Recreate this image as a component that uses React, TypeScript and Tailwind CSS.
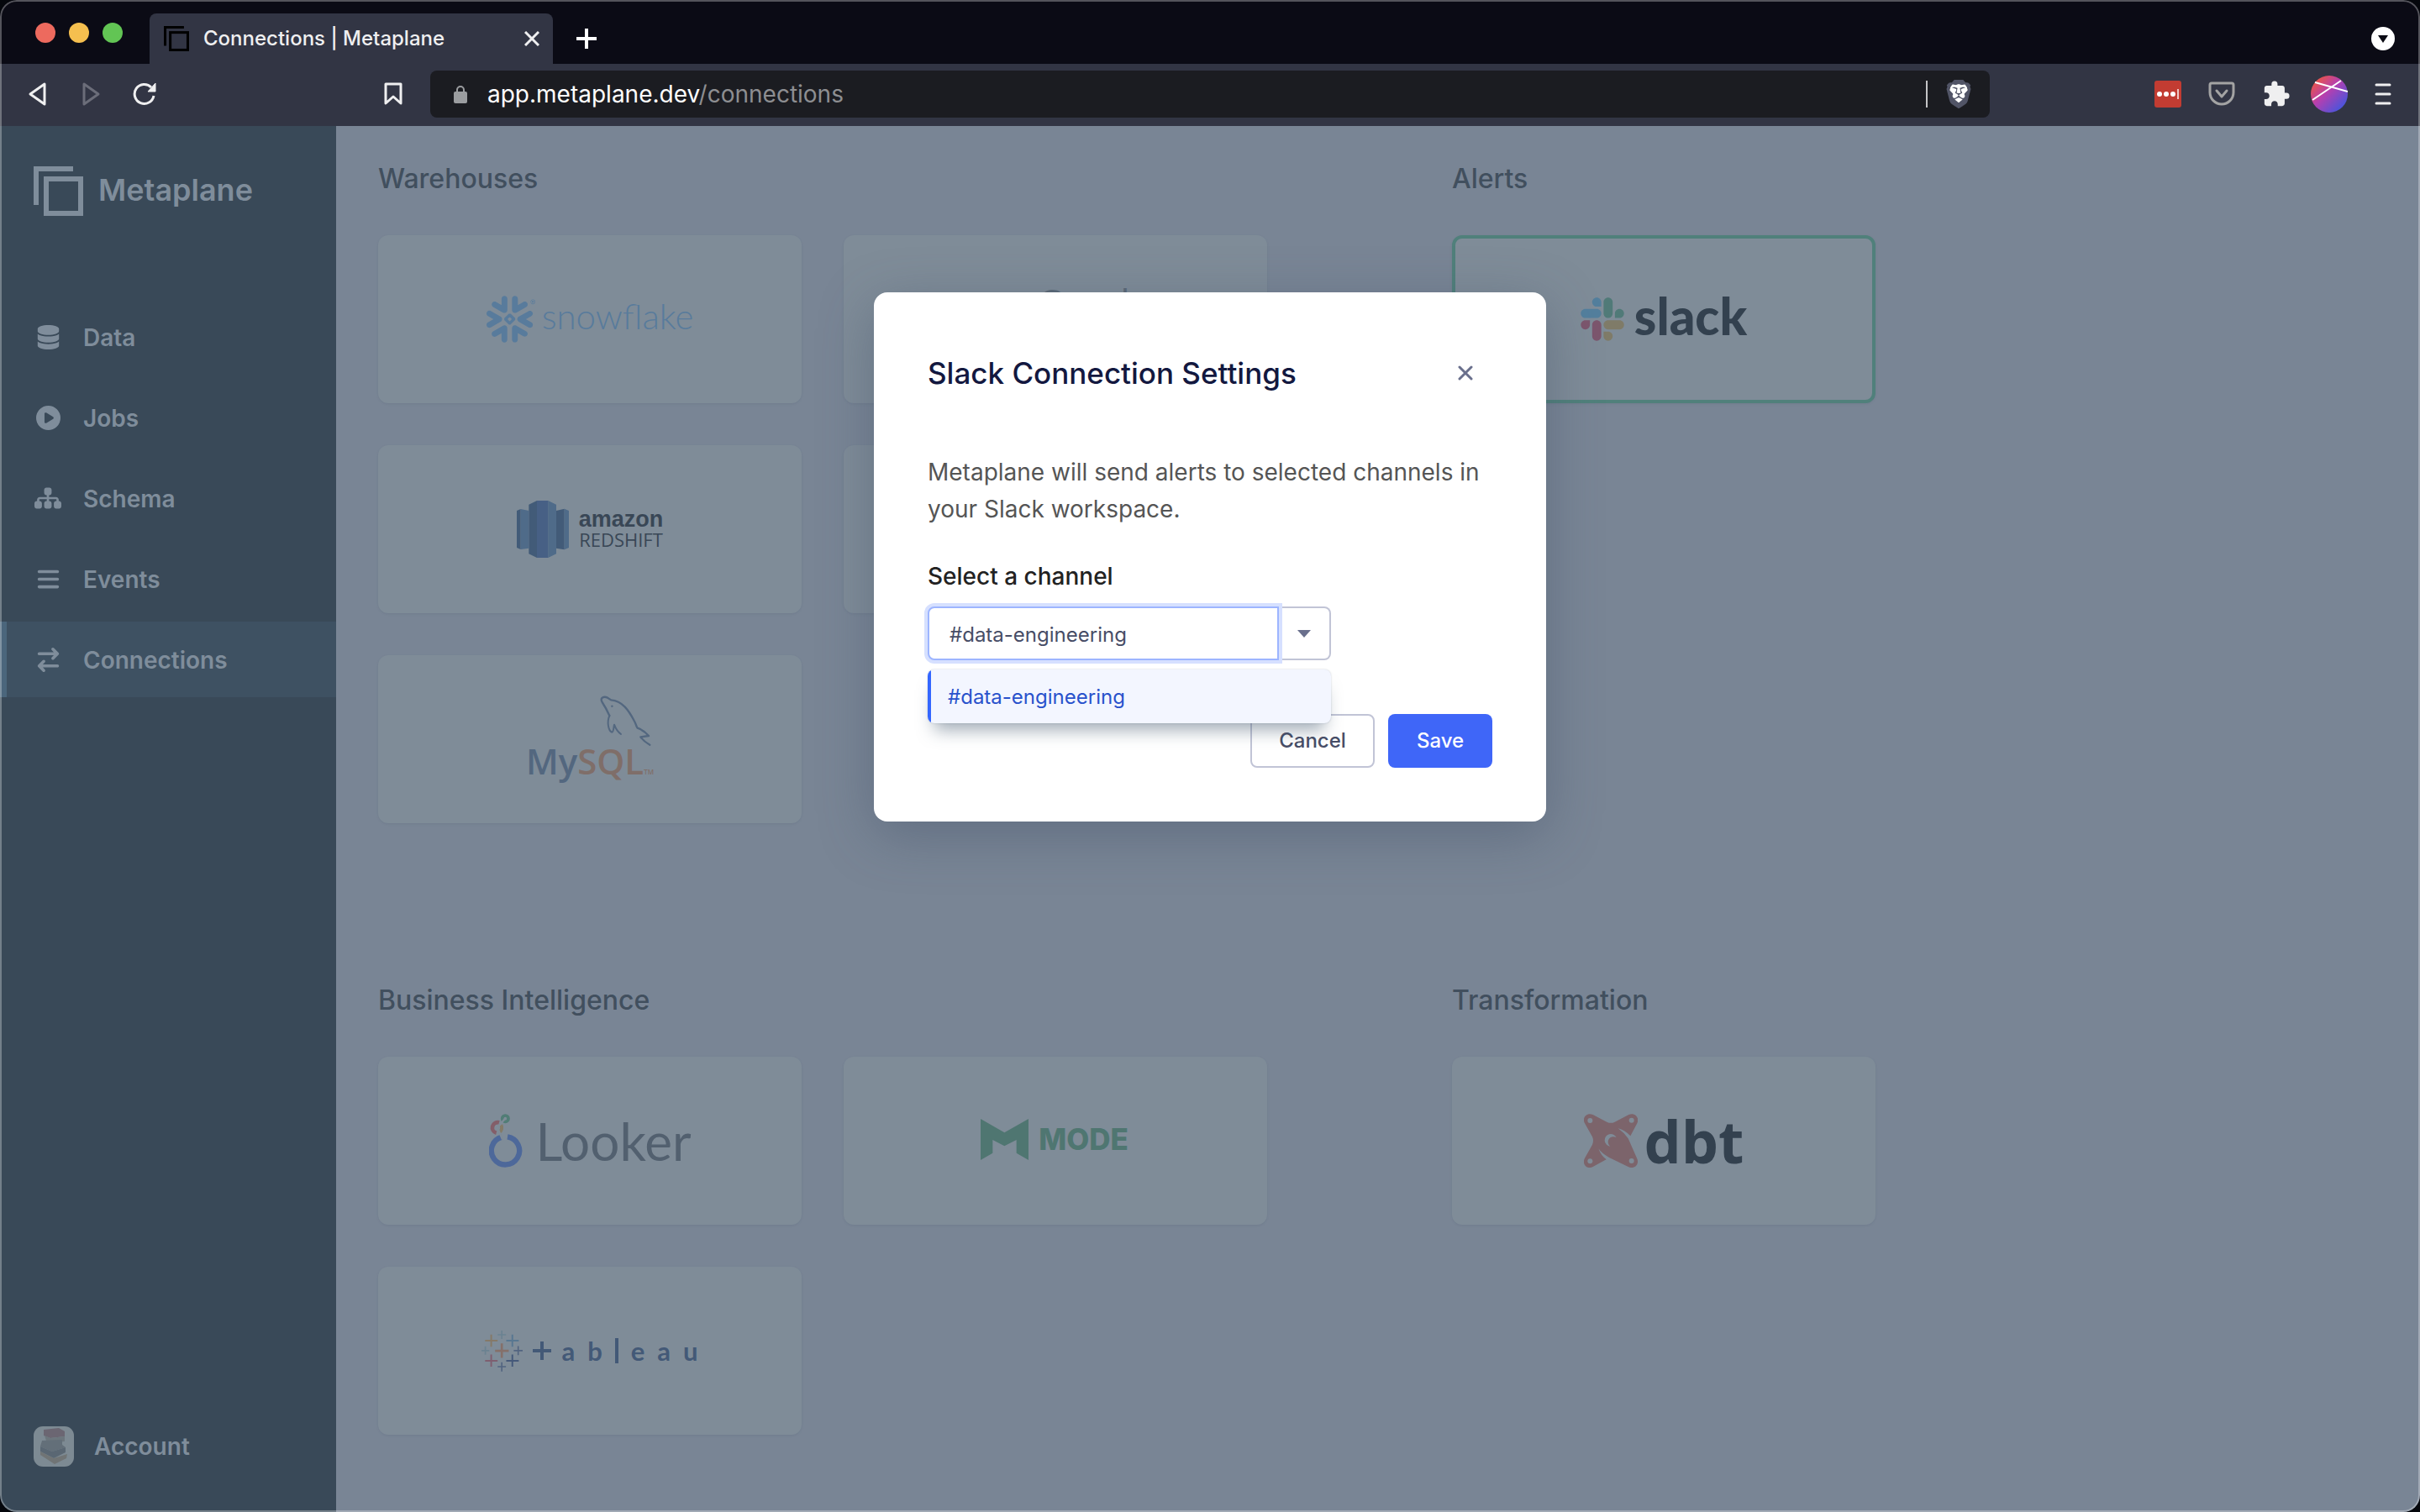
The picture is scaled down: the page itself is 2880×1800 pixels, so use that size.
import type { ReactNode } from 'react'
import { FaArrowRightArrowLeft, FaBars, FaCirclePlay, FaDatabase, FaSitemap } from 'react-icons/fa6'
import { MdExtension } from 'react-icons/md'
import { SiBrave, SiSnowflake } from 'react-icons/si'

const navItems = [
  { label: 'Data', icon: FaDatabase, iconClass: 'text-[29px]' },
  { label: 'Jobs', icon: FaCirclePlay, iconClass: 'text-[29px]' },
  { label: 'Schema', icon: FaSitemap, iconClass: 'text-[32px]' },
  { label: 'Events', icon: FaBars, iconClass: 'text-[29px]' },
  { label: 'Connections', icon: FaArrowRightArrowLeft, iconClass: 'text-[29px]', active: true },
]

function MetaplaneMark({ className }: { className?: string }) {
  return (
    <svg viewBox="0 0 59 59" fill="none" stroke="currentColor" strokeWidth="6" className={className}>
      <path d="M3 46V3H47" />
      <rect x="15" y="15" width="41" height="41" />
    </svg>
  )
}

function SnowflakeLogo() {
  return (
    <div className="flex items-center gap-2 text-[#587b9c]">
      <SiSnowflake className="size-[58px]" />
      <span className="pb-2 font-[Lato] text-[42px] leading-[50px] font-light">snowflake</span>
    </div>
  )
}

function BigQueryLogo() {
  return (
    <div className="flex items-center gap-5 pl-7 text-[#5b6977]">
      <svg viewBox="0 0 80 60" className="h-[60px] w-20">
        <path fill="#4f6b99" d="M24 2H56L74 30 56 58H24L6 30Z" />
        <circle cx="40" cy="29" r="12" fill="none" stroke="#7f8c98" strokeWidth="4" />
      </svg>
      <div className="flex flex-col items-start font-['Liberation_Sans'] text-[40px] leading-[42px]">
        <span>Google</span>
        <span>BigQuery</span>
      </div>
    </div>
  )
}

function RedshiftLogo() {
  return (
    <div className="flex items-center gap-3">
      <svg viewBox="0 0 186 204" className="h-[68px] w-[62px]">
        <path fill="#425b78" d="M0 36 14 30V174L0 168ZM43 14 72 0V204L43 190ZM141 36 170 29V175L141 170Z" />
        <path fill="#4f6b89" d="M14 30 43 36V170L14 174ZM112 0 141 14V190L112 204ZM170 29 186 36V168L170 175Z" />
        <path fill="#476085" d="M72 0H112V204H72Z" />
      </svg>
      <div className="flex flex-col text-[#394756]">
        <span className="font-['Liberation_Sans'] text-[27px] leading-6 font-bold">amazon</span>
        <span className="font-['Open_Sans'] text-[22px] leading-6">REDSHIFT</span>
      </div>
    </div>
  )
}

function MysqlLogo() {
  return (
    <div className="flex flex-col pt-1">
      <svg viewBox="0 0 186 180" fill="none" stroke="#53677f" strokeLinecap="round" strokeLinejoin="round" className="ml-[88px] h-[60px] w-[62px]">
        <path strokeWidth="7" d="M34 72C24 50 16 36 8 24C0 10 10 3 22 6C30 8 34 14 40 16C80 18 104 56 122 90C130 104 130 112 134 116C150 122 164 132 174 144L145 148C152 158 160 166 178 176" />
        <path strokeWidth="6" d="M34 72C24 94 30 126 42 131C50 130 48 114 51 104C56 118 64 130 75 138" />
        <circle cx="43" cy="38" r="3" fill="#53677f" />
      </svg>
      <div className="flex items-baseline font-['Open_Sans'] text-[42px] leading-9 font-semibold">
        <span className="text-[#53677f]">My</span>
        <span className="text-[#7f6e69]">SQL</span>
        <span className="text-[8px] text-[#7f6e69]">TM</span>
      </div>
    </div>
  )
}

function SlackLogo() {
  return (
    <div className="flex items-center gap-3">
      <svg viewBox="0 0 127 127" className="size-[52px]">
        <path fill="#7c566d" d="M27.2 80c0 7.3-5.9 13.2-13.2 13.2C6.7 93.2.8 87.3.8 80c0-7.3 5.9-13.2 13.2-13.2h13.2V80zm6.6 0c0-7.3 5.9-13.2 13.2-13.2 7.3 0 13.2 5.9 13.2 13.2v33c0 7.3-5.9 13.2-13.2 13.2-7.3 0-13.2-5.9-13.2-13.2V80z" />
        <path fill="#537f9d" d="M47 27c-7.3 0-13.2-5.9-13.2-13.2C33.8 6.5 39.7.6 47 .6c7.3 0 13.2 5.9 13.2 13.2V27H47zm0 6.7c7.3 0 13.2 5.9 13.2 13.2 0 7.3-5.9 13.2-13.2 13.2H13.9C6.6 60.1.7 54.2.7 46.9c0-7.3 5.9-13.2 13.2-13.2H47z" />
        <path fill="#507a78" d="M99.9 46.9c0-7.3 5.9-13.2 13.2-13.2 7.3 0 13.2 5.9 13.2 13.2 0 7.3-5.9 13.2-13.2 13.2H99.9V46.9zm-6.6 0c0 7.3-5.9 13.2-13.2 13.2-7.3 0-13.2-5.9-13.2-13.2V13.8C66.9 6.5 72.8.6 80.1.6c7.3 0 13.2 5.9 13.2 13.2v33.1z" />
        <path fill="#7f7b68" d="M80.1 99.8c7.3 0 13.2 5.9 13.2 13.2 0 7.3-5.9 13.2-13.2 13.2-7.3 0-13.2-5.9-13.2-13.2V99.8h13.2zm0-6.6c-7.3 0-13.2-5.9-13.2-13.2 0-7.3 5.9-13.2 13.2-13.2h33.1c7.3 0 13.2 5.9 13.2 13.2 0 7.3-5.9 13.2-13.2 13.2H80.1z" />
      </svg>
      <span className="pb-2 font-[Lato] text-[60px] leading-[44px] font-black text-[#33414f]">slack</span>
    </div>
  )
}

function LookerLogo() {
  return (
    <div className="flex items-center gap-4">
      <svg viewBox="0 0 120 192" fill="none" className="h-16 w-10">
        <path stroke="#4d689a" strokeWidth="19" d="M46 83A50 50 0 1 0 66 82" />
        <path stroke="#835e69" strokeWidth="14" d="M26 68A19 19 0 1 1 36 31" />
        <path stroke="#847b67" strokeWidth="12" d="M43 40A19 19 0 0 1 36 66" />
        <circle stroke="#517d76" strokeWidth="11" cx="58" cy="17" r="11" />
        <path stroke="#7f8c98" strokeWidth="7" d="M57 17 30 49 48 92" />
      </svg>
      <span className="font-[Lato] text-[62px] leading-16 text-[#52606f]">Looker</span>
    </div>
  )
}

function ModeLogo() {
  return (
    <div className="flex items-center gap-3 pr-[2px] pb-1 text-[#4f7671]">
      <svg viewBox="0 0 171 147" fill="currentColor" className="h-[49px] w-[57px]">
        <path d="M0 0 85 49 171 0V147L128 122V75L85 97L43 75V122L0 147Z" />
      </svg>
      <span className="font-[Inter] text-[35px] leading-[49px] font-extrabold">MODE</span>
    </div>
  )
}

function DbtLogo() {
  return (
    <div className="flex items-center gap-2">
      <svg viewBox="0 0 192 192" className="size-16">
        <path
          fill="#7c646b"
          d="M32 3 82 29Q96 36 110 29L160 3C182-6 200 14 190 34L166 79Q146 58 122 52Q142 66 158 88L189 158C200 180 180 200 158 189L90 156Q62 140 52 124Q60 148 80 163L32 189C10 200-8 180 3 158L30 110Q36 96 30 82L3 34C-8 14 10-6 32 3Z"
        />
        <g fill="#7f8c98">
          <circle cx="22" cy="24" r="9" />
          <circle cx="170" cy="23" r="9" />
          <circle cx="22" cy="169" r="9" />
          <circle cx="170" cy="168" r="9" />
          <path d="M116 85A22 22 0 1 0 94 116A15 15 0 0 1 116 85Z" />
        </g>
      </svg>
      <span className="font-['Open_Sans'] text-[70px] leading-16 font-bold text-[#33414f]">dbt</span>
    </div>
  )
}

function TableauLogo() {
  return (
    <div className="flex items-center gap-3 text-[#435977]">
      <svg viewBox="0 0 148 148" fill="none" strokeWidth="6" className="size-[49px]">
        <path stroke="#857968" d="M35 14V58M13 36H58" />
        <path stroke="#587791" d="M111 14V58M89 36H134" />
        <path stroke="#7e5f70" d="M35 86V130M13 109H58" />
        <path stroke="#45597a" d="M111 86V130M89 109H134" />
        <path stroke="#85706a" strokeWidth="8" d="M73 46V98M49 73H98" />
        <path stroke="#6b8291" strokeWidth="5" d="M73 0V30M58 15H88M14 57V87M0 72H28" />
        <path stroke="#526480" strokeWidth="5" d="M73 114V147M58 130H88M132 56V88M116 72H148" />
      </svg>
      <svg viewBox="0 0 22 22" stroke="currentColor" strokeWidth="4" className="size-[22px]">
        <path d="M11 0V22M0 11H22" />
      </svg>
      <div className="flex items-center gap-[15px] font-[Lato] text-[31px] leading-[49px] font-bold">
        <span>a</span>
        <span>b</span>
        <span className="h-[30px] w-1 bg-[#435977]" />
        <span>e</span>
        <span>a</span>
        <span>u</span>
      </div>
    </div>
  )
}

function Card({ name, connected, children }: { name: string; connected?: boolean; children?: ReactNode }) {
  return (
    <button
      type="button"
      aria-label={name}
      className={
        connected
          ? 'flex h-[200px] w-[504px] items-center justify-center rounded-xl border-4 border-[#50807b] bg-[#7f8c98] shadow-sm shadow-slate-600/10'
          : 'flex h-[200px] w-[504px] items-center justify-center rounded-xl bg-[#7f8c98] shadow-sm shadow-slate-600/10'
      }
    >
      {children}
    </button>
  )
}

function Section({ title, wide, children }: { title: string; wide?: boolean; children: ReactNode }) {
  return (
    <section>
      <h2 className="mb-[43px] text-[32px] leading-[48px] font-medium text-[#414f5e]">{title}</h2>
      <div className={wide ? 'grid grid-cols-2 gap-[50px]' : 'grid gap-[50px]'}>{children}</div>
    </section>
  )
}

function BrowserChrome() {
  return (
    <header className="text-[#efeff0]">
      <div className="flex h-[76px] items-end bg-[#0b0b15] pl-[42px]">
        <div className="flex h-[76px] items-center gap-4 pt-[2px]">
          <span className="size-6 rounded-full bg-[#ed6a5e]" />
          <span className="size-6 rounded-full bg-[#f5bf4f]" />
          <span className="size-6 rounded-full bg-[#62c554]" />
        </div>
        <div className="ml-8 flex h-[60px] w-[480px] items-center rounded-t-lg bg-[#323544] pr-4 pl-[17px]">
          <MetaplaneMark className="size-[30px] text-black" />
          <span className="ml-[17px] text-[24px] font-medium">Connections | Metaplane</span>
          <button type="button" aria-label="Close tab" className="ml-auto">
            <svg viewBox="0 0 18 18" stroke="currentColor" strokeWidth="3" className="size-[18px]">
              <path d="M1 1 17 17M17 1 1 17" />
            </svg>
          </button>
        </div>
        <button type="button" aria-label="New tab" className="mb-[18px] ml-7">
          <svg viewBox="0 0 24 24" stroke="#fff" strokeWidth="4" className="size-6">
            <path d="M12 0V24M0 12H24" />
          </svg>
        </button>
        <button type="button" aria-label="Search tabs" className="mr-[30px] mb-4 ml-auto">
          <svg viewBox="0 0 28 28" className="size-7">
            <circle cx="14" cy="14" r="14" fill="#fff" />
            <path d="M8 10H20L14 19Z" fill="#0b0b15" />
          </svg>
        </button>
      </div>

      <div className="flex h-[74px] items-center bg-[#323544] px-[34px] pb-[2px]">
        <button type="button" aria-label="Back">
          <svg viewBox="0 0 22 28" fill="none" stroke="currentColor" strokeWidth="3" strokeLinejoin="round" className="h-7 w-[22px]">
            <path d="M19 2V26L2 14Z" />
          </svg>
        </button>
        <button type="button" aria-label="Forward" className="ml-[42px] text-[#6b6d79]">
          <svg viewBox="0 0 22 28" fill="none" stroke="currentColor" strokeWidth="3" strokeLinejoin="round" className="h-7 w-[22px]">
            <path d="M2 2V26L19 14Z" />
          </svg>
        </button>
        <button type="button" aria-label="Reload" className="ml-[38px]">
          <svg viewBox="0 0 28 28" fill="none" stroke="currentColor" strokeWidth="3" className="size-7">
            <path d="M25 16A11.500 11.500 0 1 1 22 6" />
            <path d="M27 1V11H18Z" fill="currentColor" strokeWidth="1" />
          </svg>
        </button>
        <button type="button" aria-label="Bookmark" className="ml-[271px]">
          <svg viewBox="0 0 22 28" fill="none" stroke="currentColor" strokeWidth="3" strokeLinejoin="round" className="h-7 w-[22px]">
            <path d="M2 2H20V25L11 17L2 25Z" />
          </svg>
        </button>
        <div className="ml-[33px] flex h-14 flex-1 items-center rounded-lg bg-[#1b1c21] pr-5 pl-7">
          <svg viewBox="0 0 16 22" className="h-[22px] w-4">
            <path d="M4 10V6a4 4 0 0 1 8 0V10" fill="none" stroke="#9b9da0" strokeWidth="2" />
            <rect y="8" width="16" height="14" rx="2" fill="#9b9da0" />
          </svg>
          <span className="ml-6 text-[28px] text-white">
            app.metaplane.dev<span className="text-[#8d8e91]">/connections</span>
          </span>
          <span className="ml-auto h-8 w-[2px] bg-[#c4c4c6]" />
          <span className="relative ml-5 flex h-10 w-[34px] items-center justify-center">
            <svg viewBox="0 0 34 40" className="absolute inset-0 h-10 w-[34px]">
              <path d="M8 8H26L28 16L24 28L17 34L10 28L6 16Z" fill="#fff" />
            </svg>
            <SiBrave className="relative size-9 text-[#515466]" />
          </span>
        </div>
        <div className="ml-[196px] flex items-center">
          <svg viewBox="0 0 32 32" className="size-8">
            <rect width="32" height="32" rx="3" fill="#c23c32" />
            <g fill="#fff">
              <circle cx="6" cy="16" r="3" />
              <circle cx="14" cy="16" r="3" />
              <circle cx="22" cy="16" r="3" />
              <rect x="27" y="10" width="2" height="12" opacity="0.7" />
            </g>
          </svg>
          <svg viewBox="0 0 32 30" fill="none" stroke="#a3a3a3" strokeWidth="3" strokeLinecap="round" strokeLinejoin="round" className="ml-8 h-[30px] w-8">
            <path d="M4 2H28Q30 2 30 4V13A14 14 0 0 1 2 13V4Q2 2 4 2Z" />
            <path d="M10 11 16 18 22 11" />
          </svg>
          <MdExtension className="ml-8 size-[34px]" />
          <svg viewBox="0 0 44 44" className="ml-6 size-11">
            <defs>
              <linearGradient id="avatar" x1="0" y1="0" x2="1" y2="1">
                <stop offset="0.1" stopColor="#f0563f" />
                <stop offset="0.45" stopColor="#b53fb0" />
                <stop offset="0.9" stopColor="#3f57e0" />
              </linearGradient>
            </defs>
            <circle cx="22" cy="22" r="22" fill="url(#avatar)" />
            <path d="M2 29 36 6M5 8 44 19" stroke="#fff" strokeWidth="2" />
          </svg>
          <button type="button" aria-label="Menu" className="ml-8">
            <svg viewBox="0 0 20 26" stroke="currentColor" strokeWidth="3" strokeLinecap="round" className="h-[26px] w-5">
              <path d="M2 2H18M2 13H18M2 24H18" />
            </svg>
          </button>
        </div>
      </div>
    </header>
  )
}

function Sidebar() {
  return (
    <aside className="flex w-[400px] shrink-0 flex-col bg-[#394958] pb-[54px] text-[#7f8d9b]">
      <div className="flex items-center gap-[18px] pt-12 pl-10">
        <MetaplaneMark className="size-[59px]" />
        <span className="pb-1 text-[36px] leading-[54px] font-semibold">Metaplane</span>
      </div>
      <nav className="mt-[99px] flex flex-col gap-[6px]">
        {navItems.map(item => (
          <a
            key={item.label}
            href="#"
            className={
              item.active
                ? 'flex h-[90px] items-center border-l-8 border-[#4b667c] bg-[#3e5162] pl-[31px]'
                : 'flex h-[90px] items-center border-l-8 border-transparent pl-[31px]'
            }
          >
            <span className="flex w-9 justify-center">
              <item.icon className={item.iconClass} />
            </span>
            <span className="ml-6 pt-[2px] text-[28px] font-semibold">{item.label}</span>
          </a>
        ))}
      </nav>
      <a href="#" className="mt-auto flex items-center gap-6 pl-10">
        <svg viewBox="0 0 48 48" className="size-12">
          <rect width="48" height="48" rx="11" fill="#7d8a93" />
          <path d="M12 4 30 2 37 6V12L20 14 12 11Z" fill="#6b6672" />
          <path d="M13 11 20 14 37 12V18L16 20Z" fill="#6c767d" />
          <path d="M10 17 34 16V22L38 25 22 30 8 24Z" fill="#636f79" />
          <path d="M8 24 22 30 38 25V31L24 38 8 30Z" fill="#5a6773" />
          <path d="M8 30 24 38 40 33 39 38 25 45 8 34Z" fill="#707475" />
        </svg>
        <span className="text-[28px] font-semibold">Account</span>
      </a>
    </aside>
  )
}

function SlackDialog() {
  return (
    <div
      role="dialog"
      aria-labelledby="dialog-title"
      className="w-[800px] rounded-2xl bg-white p-16 shadow-[0_16px_64px_rgba(60,75,100,0.4)]"
    >
      <div className="flex h-16 items-center justify-between">
        <h1 id="dialog-title" className="text-[35px] font-medium text-[#13183f]">
          Slack Connection Settings
        </h1>
        <button type="button" aria-label="Close" className="flex size-16 items-center justify-center text-[#696f8c]">
          <svg viewBox="0 0 18 18" stroke="currentColor" strokeWidth="3" strokeLinecap="round" className="size-[18px]">
            <path d="M2 2 16 16M16 2 2 16" />
          </svg>
        </button>
      </div>

      <p className="mt-16 text-[28px] leading-[44px] text-[#555555]">
        Metaplane will send alerts to selected channels in your Slack workspace.
      </p>

      <label htmlFor="channel" className="mt-9 block text-[28px] leading-[44px] font-medium text-[#222222]">
        Select a channel
      </label>
      <div className="relative mt-[14px] flex w-[480px]">
        <input
          id="channel"
          type="text"
          defaultValue="#data-engineering"
          className="relative z-10 h-16 w-[418px] rounded-l-lg border-2 border-[#9db5ff] bg-white px-6 pt-[2px] text-[24px] text-[#474d66] ring-4 ring-[#d6e0ff] outline-none"
        />
        <button
          type="button"
          aria-label="Show channels"
          className="flex h-16 flex-1 items-center justify-center rounded-r-lg border-2 border-l-0 border-[#c1c4d6]"
        >
          <svg viewBox="0 0 16 9" className="h-[9px] w-4">
            <path d="M0 0H16L8 9Z" fill="#696f8c" />
          </svg>
        </button>
        <ul
          role="listbox"
          className="absolute top-full right-0 left-0 z-20 mt-[11px] overflow-hidden rounded-lg bg-[#f3f6ff] shadow-[0_0_2px_rgba(67,90,111,0.3),0_16px_20px_-8px_rgba(67,90,111,0.5)]"
        >
          <li role="option" aria-selected="true" className="flex h-16 items-center border-l-4 border-[#3366ff] pt-[2px] pl-5 text-[24px] text-[#2952cc]">
            #data-engineering
          </li>
        </ul>
      </div>

      <div className="mt-16 flex justify-end gap-4">
        <button type="button" className="h-16 w-[148px] rounded-lg border-2 border-[#c1c4d6] bg-white text-[24px] font-medium text-[#474d66]">
          Cancel
        </button>
        <button type="button" className="h-16 w-[124px] rounded-lg bg-[#3f66f8] text-[24px] font-medium text-white">
          Save
        </button>
      </div>
    </div>
  )
}

export default function App() {
  return (
    <div className="min-h-screen bg-[#05070c] font-[Inter,sans-serif]">
      <div className="relative flex min-h-screen flex-col overflow-hidden rounded-[20px]">
        <BrowserChrome />
        <div className="flex flex-1">
          <Sidebar />
          <main className="flex-1 bg-[#798595] pt-[39px] pb-[92px] pl-[50px]">
            <div className="grid grid-cols-[1058px_504px] gap-x-[220px] gap-y-[187px]">
              <Section title="Warehouses" wide>
                <Card name="Snowflake"><SnowflakeLogo /></Card>
                <Card name="Google BigQuery"><BigQueryLogo /></Card>
                <Card name="Amazon Redshift"><RedshiftLogo /></Card>
                <Card name="Postgres" />
                <Card name="MySQL"><MysqlLogo /></Card>
              </Section>
              <Section title="Alerts">
                <Card name="Slack" connected><SlackLogo /></Card>
              </Section>
              <Section title="Business Intelligence" wide>
                <Card name="Looker"><LookerLogo /></Card>
                <Card name="Mode"><ModeLogo /></Card>
                <Card name="Tableau"><TableauLogo /></Card>
              </Section>
              <Section title="Transformation">
                <Card name="dbt"><DbtLogo /></Card>
              </Section>
            </div>
          </main>
        </div>

        <div className="absolute inset-0 flex items-start justify-center pt-[348px]">
          <SlackDialog />
        </div>
        <div className="pointer-events-none absolute inset-0 rounded-[20px] border-2 border-white/30" />
      </div>
    </div>
  )
}
